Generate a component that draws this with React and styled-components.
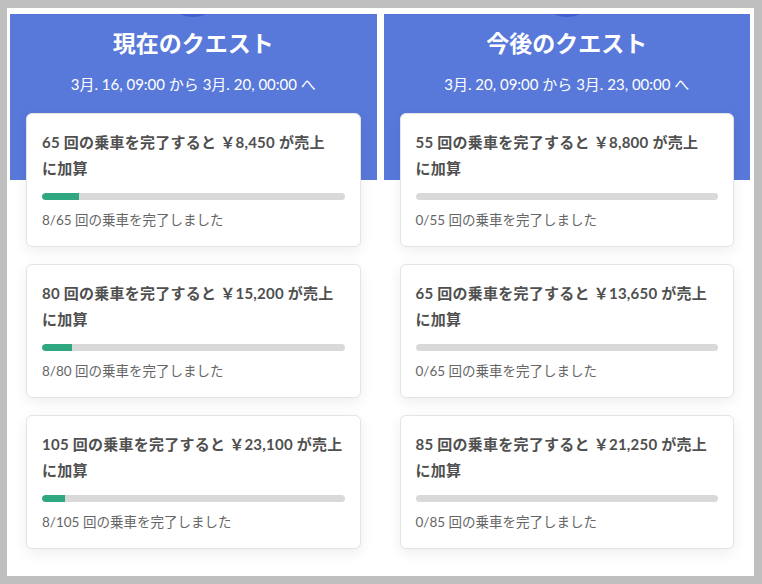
import React from 'react'
import styled, { createGlobalStyle } from 'styled-components'

const GlobalStyle = createGlobalStyle`
    body {
        margin: 0;
        background: #bfbfbf;
        font-family: Lato, "Noto Sans CJK JP", sans-serif;
    }
`

const quests = [
    {
        title: '現在のクエスト',
        period: '3月. 16, 09:00 から 3月. 20, 00:00 へ',
        items: [
            { rides: 65, reward: '8,450', done: 8 },
            { rides: 80, reward: '15,200', done: 8 },
            { rides: 105, reward: '23,100', done: 8 },
        ],
    },
    {
        title: '今後のクエスト',
        period: '3月. 20, 09:00 から 3月. 23, 00:00 へ',
        items: [
            { rides: 55, reward: '8,800', done: 0 },
            { rides: 65, reward: '13,650', done: 0 },
            { rides: 85, reward: '21,250', done: 0 },
        ],
    },
]

const QuestCard = ({ rides, reward, done }) => (
    <Card>
        <CardTitle>
            {rides} 回の乗車を完了すると ￥{reward} が売上<NoWrap>に加算</NoWrap>
        </CardTitle>
        <Track>
            <Fill style={{ width: `${(done / rides) * 100}%` }} />
        </Track>
        <Progress>
            {done}/{rides} 回の乗車を完了しました
        </Progress>
    </Card>
)

const App = () => {
    return (
        <>
            <GlobalStyle />
            <Frame>
                {quests.map((q) => (
                    <Panel key={q.title}>
                        <Avatar />
                        <Title>{q.title}</Title>
                        <Period>{q.period}</Period>
                        <CardList>
                            {q.items.map((item) => (
                                <QuestCard key={item.rides} {...item} />
                            ))}
                        </CardList>
                    </Panel>
                ))}
            </Frame>
        </>
    )
}

export default App

const Frame = styled.div`
    margin: 8px 0 0 7px;
    width: 747px;
    height: 568px;
    box-sizing: border-box;
    background: #fff;
    padding: 6px 4px 0 3px;
    display: flex;
    gap: 7px;
`
const Panel = styled.div`
    flex: 1;
    overflow: hidden;
    display: flex;
    flex-direction: column;
    align-items: center;
    background: linear-gradient(to bottom, #5879da 0, #5879da 166px, #fff 166px);
`
const Avatar = styled.div`
    width: 60px;
    height: 60px;
    border-radius: 50%;
    background: #3f5fcf;
    margin-top: -57px;
    flex-shrink: 0;
`
const Title = styled.div`
    margin-top: 10px;
    font-size: 23px;
    line-height: 32px;
    font-weight: 700;
    color: #fff;
`
const Period = styled.div`
    margin-top: 14px;
    font-size: 15px;
    line-height: 22px;
    color: #fff;
`
const CardList = styled.div`
    align-self: stretch;
    margin: 18px 16px 0;
    display: flex;
    flex-direction: column;
    gap: 17px;
`
const Card = styled.div`
    background: #fff;
    border: 1px solid #e4e4e4;
    border-radius: 6px;
    box-shadow: 0 4px 14px rgba(0, 0, 0, 0.07);
    padding: 15px 15px 16px;
`
const CardTitle = styled.div`
    font-size: 15px;
    line-height: 26px;
    font-weight: 700;
    letter-spacing: 0.25px;
    color: #505050;
`
const NoWrap = styled.span`
    white-space: nowrap;
`
const Track = styled.div`
    margin-top: 12px;
    height: 7px;
    border-radius: 4px;
    background: #d9d9d9;
    overflow: hidden;
`
const Fill = styled.div`
    height: 100%;
    background: #2fa780;
    border-radius: 4px 0 0 4px;
`
const Progress = styled.div`
    margin-top: 10px;
    font-size: 13.5px;
    line-height: 20px;
    color: #666;
`
